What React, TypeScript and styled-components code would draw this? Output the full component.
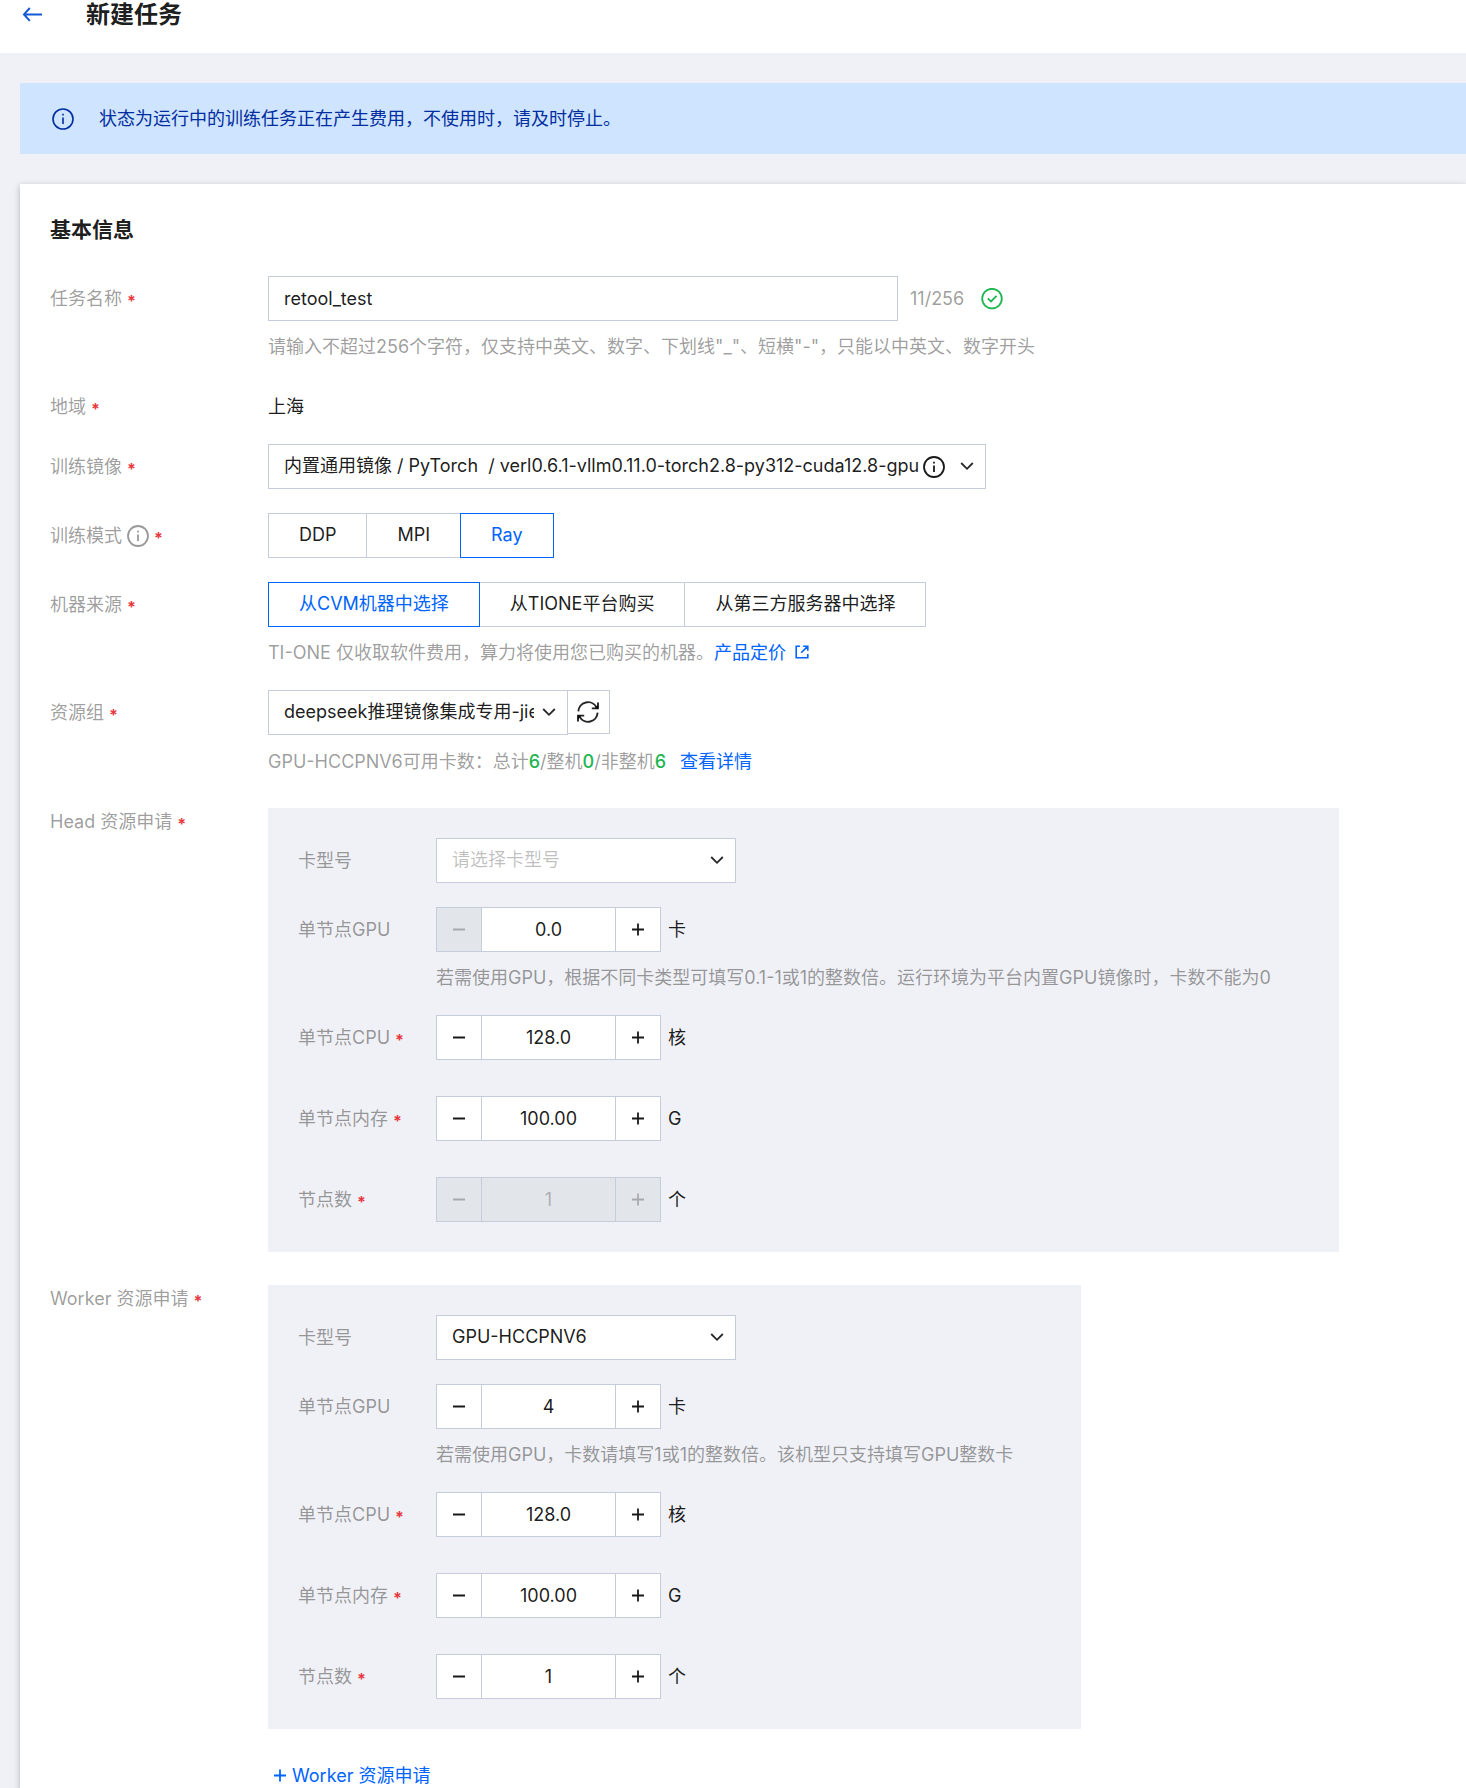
import React, { useState } from 'react';
import styled, { createGlobalStyle, css } from 'styled-components';

const color = {
  page: '#f0f1f6',
  border: '#c6cdda',
  text: 'rgba(0, 0, 0, 0.9)',
  muted: 'rgba(0, 0, 0, 0.4)',
  faint: 'rgba(0, 0, 0, 0.26)',
  blue: '#0064ff',
  green: '#1eb650',
  red: '#e63740',
  disabled: '#e2e5ea',
};

const GlobalStyle = createGlobalStyle`
  *, *::before, *::after { box-sizing: border-box; }
  body {
    margin: 0;
    background: ${color.page};
    color: ${color.text};
    font-family: Inter, "Noto Sans CJK SC", sans-serif;
    font-size: 18px;
    line-height: 27px;
  }
  button, input, select { font: inherit; color: inherit; }
  h1, h2, p { margin: 0; }
  svg { display: block; flex: none; }
`;

const Page = styled.div`
  min-height: 100vh;
  display: flex;
  flex-direction: column;
`;

const Header = styled.header`
  display: flex;
  align-items: center;
  gap: 44px;
  padding: 0 22px 24px 20px;
  background: #fff;
`;

const BackButton = styled.button`
  display: flex;
  padding: 0;
  border: 0;
  background: none;
  color: #1659d6;
  cursor: pointer;
`;

const PageTitle = styled.h1`
  font-size: 24px;
  line-height: 29px;
  font-weight: 700;
`;

const Content = styled.main`
  flex: 1;
  display: flex;
  flex-direction: column;
  gap: 30px;
  padding: 30px 0 0 20px;
`;

const Notice = styled.div`
  display: flex;
  align-items: center;
  gap: 25px;
  padding: 22px 32px;
  background: #cfe4ff;
  color: #002da0;
`;

const Card = styled.section`
  flex: 1;
  padding: 31px 0 0 30px;
  background: #fff;
  box-shadow: 0 2px 6px rgba(54, 58, 80, 0.36);
`;

const SectionTitle = styled.h2`
  font-size: 21px;
  line-height: 30px;
  font-weight: 700;
  margin-bottom: 31px;
`;

const Form = styled.form`
  display: flex;
  flex-direction: column;
  gap: 24px;
`;

const Row = styled.div<{ $labelWidth?: number; $spaced?: boolean }>`
  display: grid;
  grid-template-columns: ${(p) => p.$labelWidth ?? 218}px minmax(0, 1fr);
  align-items: start;
  padding-bottom: ${(p) => (p.$spaced ? 12 : 0)}px;
`;

const LabelBox = styled.div`
  display: flex;
  align-items: center;
  gap: 5px;
  padding-top: 9px;
  color: ${color.muted};
  white-space: nowrap;
`;

const Star = styled.span`
  height: 27px;
  padding-top: 3px;
  color: ${color.red};
  font-size: 16px;
  font-weight: 700;
`;

const Line = styled.div<{ $gap?: number }>`
  display: flex;
  align-items: center;
  gap: ${(p) => p.$gap ?? 0}px;
`;

const GroupLine = styled(Line)`
  align-items: flex-start;
  padding-bottom: 1px;
`;

const PlainValue = styled.div`
  padding-top: 9px;
`;

const Hint = styled.p<{ $nowrap?: boolean }>`
  margin-top: 12px;
  color: ${color.muted};
  white-space: ${(p) => (p.$nowrap ? 'nowrap' : 'normal')};
`;

const Link = styled.a<{ $gap?: number }>`
  margin-left: ${(p) => p.$gap ?? 0}px;
  color: ${color.blue};
  text-decoration: none;
  svg { display: inline-block; margin-left: 9px; }
`;

const Green = styled.span`
  color: ${color.green};
  font-weight: 500;
`;

const box = css`
  height: 45px;
  border: 1px solid ${color.border};
  border-radius: 0;
  background: #fff;
`;

const TextInput = styled.input`
  ${box}
  width: 630px;
  max-width: 100%;
  padding: 0 15px;
`;

const Counter = styled.span`
  color: ${color.muted};
`;

const SelectBox = styled.div<{ $width: number }>`
  ${box}
  width: ${(p) => p.$width}px;
  max-width: 100%;
  display: grid;
  align-items: center;
  > * { grid-row: 1; grid-column: 1; }
`;

const Select = styled.select<{ $placeholder?: boolean; $room: number }>`
  appearance: none;
  width: 100%;
  height: 43px;
  padding: 0 ${(p) => p.$room}px 2px 15px;
  border: 0;
  background: transparent;
  color: ${(p) => (p.$placeholder ? color.faint : color.text)};
  cursor: pointer;
`;

const SelectIcons = styled.span`
  display: flex;
  align-items: center;
  justify-self: end;
  gap: 15px;
  padding-right: 11px;
  pointer-events: none;
`;

const Refresh = styled.button`
  ${box}
  height: 44px;
  width: 43px;
  margin-left: -1px;
  padding: 0 2px 0 0;
  display: grid;
  place-items: center;
  cursor: pointer;
`;

const Segment = styled.button<{ $active: boolean }>`
  ${box}
  position: relative;
  z-index: ${(p) => (p.$active ? 1 : 0)};
  padding: 0 30px 2px;
  color: ${(p) => (p.$active ? color.blue : color.text)};
  border-color: ${(p) => (p.$active ? color.blue : color.border)};
  cursor: pointer;
  & + & { margin-left: -1px; }
`;

const Panel = styled.div`
  display: flex;
  flex-direction: column;
  gap: 24px;
  width: fit-content;
  max-width: 100%;
  margin-top: 9px;
  padding: 30px 68px 30px 30px;
  background: ${color.page};
`;

const StepButton = styled.button`
  ${box}
  width: 46px;
  padding: 0;
  display: grid;
  place-items: center;
  cursor: pointer;
  &:disabled { background: ${color.disabled}; color: ${color.faint}; cursor: default; }
`;

const StepInput = styled.input`
  ${box}
  width: 135px;
  margin: 0 -1px;
  padding: 0;
  text-align: center;
  &:disabled { background: ${color.disabled}; color: ${color.faint}; }
`;

const Unit = styled.span`
  margin-left: 7px;
`;

const AddButton = styled.button`
  display: flex;
  align-items: center;
  gap: 5px;
  margin-top: 9px;
  padding: 0 5px;
  border: 0;
  background: none;
  color: ${color.blue};
  line-height: 27px;
  cursor: pointer;
`;

const InfoIcon = ({ width = 1.6 }: { width?: number }) => (
  <svg width="22" height="22" viewBox="0 0 22 22" fill="none" stroke="currentColor" strokeWidth={width} aria-hidden="true">
    <circle cx="11" cy="11" r="10" />
    <path d="M11 9.5V16M11 5.8V7.6" />
  </svg>
);

const ChevronIcon = () => (
  <svg width="14" height="14" viewBox="0 0 14 14" fill="none" stroke="rgba(0,0,0,0.85)" strokeWidth="1.8" aria-hidden="true">
    <path d="M1.2 3L7 8.8L12.8 3" />
  </svg>
);

const MinusIcon = () => (
  <svg width="14" height="14" viewBox="0 0 14 14" stroke="currentColor" strokeWidth="2" aria-hidden="true">
    <path d="M1 6.5H13" />
  </svg>
);

const PlusIcon = () => (
  <svg width="14" height="14" viewBox="0 0 14 14" stroke="currentColor" strokeWidth="1.8" aria-hidden="true">
    <path d="M1 6.5H13M7 0.5V12.5" />
  </svg>
);

const BackIcon = () => (
  <svg width="22" height="16" viewBox="0 0 22 16" fill="none" stroke="currentColor" strokeWidth="2" aria-hidden="true">
    <path d="M22 7.4H4M9.8 1L4 7.4L9.8 13.8" />
  </svg>
);

const CheckIcon = () => (
  <svg width="22" height="22" viewBox="0 0 22 22" fill="none" stroke={color.green} strokeWidth="1.8" aria-label="校验通过">
    <circle cx="11" cy="10.6" r="9.8" />
    <path d="M6.8 10.4L10 13.4L15.6 7.8" />
  </svg>
);

const ExternalIcon = () => (
  <svg width="14" height="14" viewBox="0 0 14 14" fill="none" stroke="currentColor" strokeWidth="1.6" aria-hidden="true">
    <path d="M5 1.2H1.2V12.8H12.8V9M8.2 1.2H12.8V5.8M12.6 1.4L6.2 7.8" />
  </svg>
);

const RefreshIcon = () => (
  <svg width="22" height="22" viewBox="0 0 22 22" fill="none" stroke="rgba(0,0,0,0.85)" strokeWidth="1.9" aria-hidden="true">
    <path d="M1.4 10.4A9.6 9.6 0 0 1 19.4 6.2M20.6 11.6A9.6 9.6 0 0 1 2.6 15.8" />
    <path d="M21 1.6V7.4H14.8M1 20.4V14.6H7.2" />
    <path d="M21 3.8V7.4H17.4ZM1 18.2V14.6H4.6Z" fill="rgba(0,0,0,0.85)" stroke="none" />
  </svg>
);

interface LabelProps {
  text: string;
  htmlFor?: string;
  required?: boolean;
  info?: boolean;
}

const Label = ({ text, htmlFor, required, info }: LabelProps) => (
  <LabelBox>
    {htmlFor ? <label htmlFor={htmlFor}>{text}</label> : <span>{text}</span>}
    {info && <InfoIcon width={1.8} />}
    {required && <Star>*</Star>}
  </LabelBox>
);

interface StepperProps {
  id: string;
  label: string;
  value: string;
  digits: number;
  unit: string;
  minusDisabled?: boolean;
  disabled?: boolean;
}

const Stepper = ({ id, label, value, digits, unit, minusDisabled, disabled }: StepperProps) => {
  const [current, setCurrent] = useState(value);
  const step = (by: number) => setCurrent((Math.max(0, Number(current) + by) || 0).toFixed(digits));
  return (
    <Line>
      <StepButton type="button" aria-label={`减少${label}`} disabled={disabled || minusDisabled} onClick={() => step(-1)}>
        <MinusIcon />
      </StepButton>
      <StepInput id={id} value={current} disabled={disabled} onChange={(e) => setCurrent(e.target.value)} />
      <StepButton type="button" aria-label={`增加${label}`} disabled={disabled} onClick={() => step(1)}>
        <PlusIcon />
      </StepButton>
      <Unit>{unit}</Unit>
    </Line>
  );
};

interface SegmentsProps {
  name: string;
  items: string[];
  initial: string;
}

const Segments = ({ name, items, initial }: SegmentsProps) => {
  const [active, setActive] = useState(initial);
  return (
    <Line role="group" aria-label={name}>
      {items.map((item) => (
        <Segment key={item} type="button" $active={item === active} aria-pressed={item === active} onClick={() => setActive(item)}>
          {item}
        </Segment>
      ))}
    </Line>
  );
};

interface ResourceProps {
  prefix: string;
  card?: string;
  gpu: string;
  gpuDigits: number;
  gpuEmpty?: boolean;
  hint: string;
  nodesLocked?: boolean;
}

const ResourcePanel = ({ prefix, card, gpu, gpuDigits, gpuEmpty, hint, nodesLocked }: ResourceProps) => (
  <Panel>
    <Row $labelWidth={138}>
      <Label text="卡型号" htmlFor={`${prefix}-card`} />
      <SelectBox $width={300}>
        <Select id={`${prefix}-card`} $placeholder={!card} $room={33}>
          <option>{card ?? '请选择卡型号'}</option>
        </Select>
        <SelectIcons>
          <ChevronIcon />
        </SelectIcons>
      </SelectBox>
    </Row>
    <Row $labelWidth={138}>
      <Label text="单节点GPU" htmlFor={`${prefix}-gpu`} />
      <div>
        <Stepper id={`${prefix}-gpu`} label="单节点GPU" value={gpu} digits={gpuDigits} unit="卡" minusDisabled={gpuEmpty} />
        <Hint $nowrap>{hint}</Hint>
      </div>
    </Row>
    <Row $labelWidth={138} $spaced>
      <Label text="单节点CPU" htmlFor={`${prefix}-cpu`} required />
      <Stepper id={`${prefix}-cpu`} label="单节点CPU" value="128.0" digits={1} unit="核" />
    </Row>
    <Row $labelWidth={138} $spaced>
      <Label text="单节点内存" htmlFor={`${prefix}-memory`} required />
      <Stepper id={`${prefix}-memory`} label="单节点内存" value="100.00" digits={2} unit="G" />
    </Row>
    <Row $labelWidth={138}>
      <Label text="节点数" htmlFor={`${prefix}-nodes`} required />
      <Stepper id={`${prefix}-nodes`} label="节点数" value="1" digits={0} unit="个" disabled={nodesLocked} />
    </Row>
  </Panel>
);

export default function App() {
  const [name, setName] = useState('retool_test');
  return (
    <Page>
      <GlobalStyle />
      <Header>
        <BackButton type="button" aria-label="返回">
          <BackIcon />
        </BackButton>
        <PageTitle>新建任务</PageTitle>
      </Header>
      <Content>
        <Notice role="status">
          <InfoIcon />
          <p>状态为运行中的训练任务正在产生费用，不使用时，请及时停止。</p>
        </Notice>
        <Card>
          <SectionTitle>基本信息</SectionTitle>
          <Form onSubmit={(e) => e.preventDefault()}>
            <Row>
              <Label text="任务名称" htmlFor="task-name" required />
              <div>
                <Line $gap={12}>
                  <TextInput id="task-name" value={name} maxLength={256} onChange={(e) => setName(e.target.value)} />
                  <Line $gap={17}>
                    <Counter>{name.length}/256</Counter>
                    <CheckIcon />
                  </Line>
                </Line>
                <Hint>请输入不超过256个字符，仅支持中英文、数字、下划线"_"、短横"-"，只能以中英文、数字开头</Hint>
              </div>
            </Row>
            <Row>
              <Label text="地域" required />
              <PlainValue>上海</PlainValue>
            </Row>
            <Row>
              <Label text="训练镜像" htmlFor="image" required />
              <SelectBox $width={718}>
                <Select id="image" $room={60}>
                  <option>{'内置通用镜像 / PyTorch\u00a0 / verl0.6.1-vllm0.11.0-torch2.8-py312-cuda12.8-gpu'}</option>
                </Select>
                <SelectIcons>
                  <InfoIcon width={1.8} />
                  <ChevronIcon />
                </SelectIcons>
              </SelectBox>
            </Row>
            <Row>
              <Label text="训练模式" info required />
              <Segments name="训练模式" items={['DDP', 'MPI', 'Ray']} initial="Ray" />
            </Row>
            <Row>
              <Label text="机器来源" required />
              <div>
                <Segments
                  name="机器来源"
                  items={['从CVM机器中选择', '从TIONE平台购买', '从第三方服务器中选择']}
                  initial="从CVM机器中选择"
                />
                <Hint>
                  TI-ONE 仅收取软件费用，算力将使用您已购买的机器。
                  <Link href="#pricing">
                    产品定价
                    <ExternalIcon />
                  </Link>
                </Hint>
              </div>
            </Row>
            <Row>
              <Label text="资源组" htmlFor="group" required />
              <div>
                <GroupLine>
                  <SelectBox $width={300}>
                    <Select id="group" $room={33}>
                      <option>deepseek推理镜像集成专用-jie</option>
                    </Select>
                    <SelectIcons>
                      <ChevronIcon />
                    </SelectIcons>
                  </SelectBox>
                  <Refresh type="button" aria-label="刷新">
                    <RefreshIcon />
                  </Refresh>
                </GroupLine>
                <Hint>
                  GPU-HCCPNV6可用卡数：总计<Green>6</Green>/整机<Green>0</Green>/非整机<Green>6</Green>
                  <Link href="#detail" $gap={14}>
                    查看详情
                  </Link>
                </Hint>
              </div>
            </Row>
            <Row>
              <Label text="Head 资源申请" required />
              <ResourcePanel
                prefix="head"
                gpu="0.0"
                gpuDigits={1}
                gpuEmpty
                hint="若需使用GPU，根据不同卡类型可填写0.1-1或1的整数倍。运行环境为平台内置GPU镜像时，卡数不能为0"
                nodesLocked
              />
            </Row>
            <Row>
              <Label text="Worker 资源申请" required />
              <ResourcePanel
                prefix="worker"
                card="GPU-HCCPNV6"
                gpu="4"
                gpuDigits={0}
                hint="若需使用GPU，卡数请填写1或1的整数倍。该机型只支持填写GPU整数卡"
              />
            </Row>
            <Row>
              <span />
              <AddButton type="button">
                <PlusIcon />
                Worker 资源申请
              </AddButton>
            </Row>
          </Form>
        </Card>
      </Content>
    </Page>
  );
}
